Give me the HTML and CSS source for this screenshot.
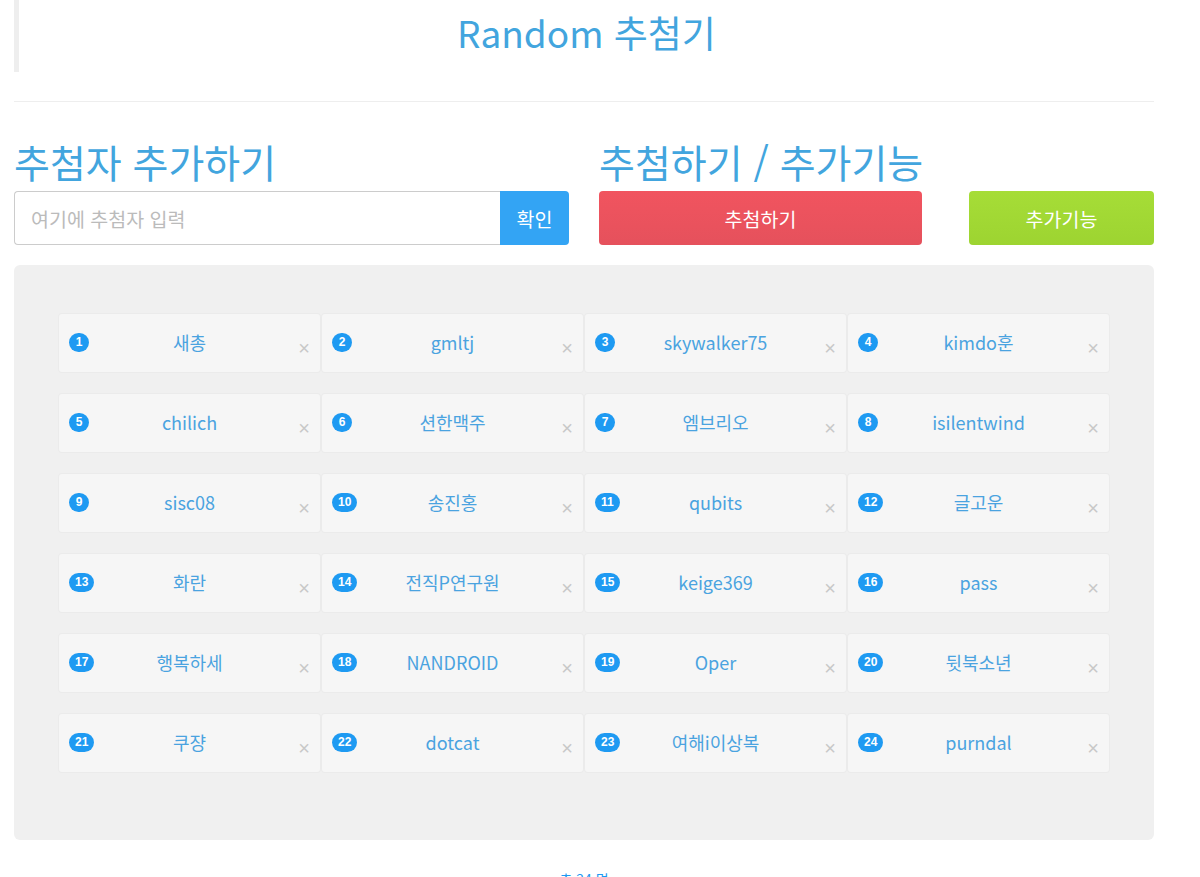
FILE: index.html
```html
<!DOCTYPE html>
<html lang="ko">
<head>
<meta charset="utf-8">
<title>Random 추첨기</title>
<link rel="stylesheet" href="styles.css">
</head>
<body>
<div class="container">
  <header class="header">
    <h1 class="title">Random 추첨기</h1>
  </header>
  <hr class="divider">
  <div class="controls">
    <section class="col">
      <h2 class="section-title">추첨자 추가하기</h2>
      <div class="input-group">
        <input class="name-input" type="text" placeholder="여기에 추첨자 입력">
        <button class="btn btn-confirm">확인</button>
      </div>
    </section>
    <section class="col">
      <h2 class="section-title">추첨하기 / 추가기능</h2>
      <div class="actions">
        <button class="btn btn-draw">추첨하기</button>
        <button class="btn btn-extra">추가기능</button>
      </div>
    </section>
  </div>
  <div class="panel">
    <div class="grid">
      <div class="card"><span class="badge">1</span><span class="name">새총</span><span class="close">×</span></div>
      <div class="card"><span class="badge">2</span><span class="name">gmltj</span><span class="close">×</span></div>
      <div class="card"><span class="badge">3</span><span class="name">skywalker75</span><span class="close">×</span></div>
      <div class="card"><span class="badge">4</span><span class="name">kimdo훈</span><span class="close">×</span></div>
      <div class="card"><span class="badge">5</span><span class="name">chilich</span><span class="close">×</span></div>
      <div class="card"><span class="badge">6</span><span class="name">션한맥주</span><span class="close">×</span></div>
      <div class="card"><span class="badge">7</span><span class="name">엠브리오</span><span class="close">×</span></div>
      <div class="card"><span class="badge">8</span><span class="name">isilentwind</span><span class="close">×</span></div>
      <div class="card"><span class="badge">9</span><span class="name">sisc08</span><span class="close">×</span></div>
      <div class="card"><span class="badge">10</span><span class="name">송진홍</span><span class="close">×</span></div>
      <div class="card"><span class="badge">11</span><span class="name">qubits</span><span class="close">×</span></div>
      <div class="card"><span class="badge">12</span><span class="name">글고운</span><span class="close">×</span></div>
      <div class="card"><span class="badge">13</span><span class="name">화란</span><span class="close">×</span></div>
      <div class="card"><span class="badge">14</span><span class="name">전직P연구원</span><span class="close">×</span></div>
      <div class="card"><span class="badge">15</span><span class="name">keige369</span><span class="close">×</span></div>
      <div class="card"><span class="badge">16</span><span class="name">pass</span><span class="close">×</span></div>
      <div class="card"><span class="badge">17</span><span class="name">행복하세</span><span class="close">×</span></div>
      <div class="card"><span class="badge">18</span><span class="name">NANDROID</span><span class="close">×</span></div>
      <div class="card"><span class="badge">19</span><span class="name">Oper</span><span class="close">×</span></div>
      <div class="card"><span class="badge">20</span><span class="name">뒷북소년</span><span class="close">×</span></div>
      <div class="card"><span class="badge">21</span><span class="name">쿠쟝</span><span class="close">×</span></div>
      <div class="card"><span class="badge">22</span><span class="name">dotcat</span><span class="close">×</span></div>
      <div class="card"><span class="badge">23</span><span class="name">여해i이상복</span><span class="close">×</span></div>
      <div class="card"><span class="badge">24</span><span class="name">purndal</span><span class="close">×</span></div>
    </div>
  </div>
  <footer class="footer">총 24 명</footer>
</div>
</body>
</html>
```
FILE: styles.css
```css
* { box-sizing: border-box; }
html, body { margin: 0; padding: 0; background: #fff; }
body {
  font-family: "Noto Sans CJK KR", "Noto Sans", sans-serif;
  color: #42a5de;
}
.container {
  width: 1140px;
  margin-left: 14px;
}
.header {
  height: 72px;
  border-left: 5px solid #eee;
  padding-bottom: 8px;
}
.title {
  margin: 0;
  font-size: 37px;
  font-weight: 400;
  line-height: 64px;
  text-align: center;
  color: #42a5de;
}
.divider {
  margin: 29px 0 0;
  border: 0;
  border-top: 1px solid #eee;
  height: 0;
}
.controls {
  display: flex;
  gap: 30px;
}
.col { flex: 1; }
.section-title {
  margin: 39px 0 10px;
  font-size: 39px;
  line-height: 40px;
  font-weight: 400;
  color: #42a5de;
}
.input-group {
  display: flex;
  height: 54px;
}
.name-input {
  flex: 1;
  border: 1px solid #ccc;
  border-right: 0;
  border-radius: 4px 0 0 4px;
  padding: 0 16px;
  font-family: inherit;
  font-size: 19.5px;
  color: #555;
  outline: none;
}
.name-input::placeholder { color: #bbb; }
.btn {
  border: 0;
  font-family: inherit;
  font-size: 19.5px;
  color: #fff;
  cursor: pointer;
}
.btn-confirm {
  width: 69px;
  background: #33a4f4;
  border-radius: 0 4px 4px 0;
}
.actions {
  display: flex;
  justify-content: space-between;
  height: 54px;
}
.btn-draw {
  width: 323px;
  border-radius: 4px;
  background: linear-gradient(#f1545f, #e5515c);
}
.btn-extra {
  width: 185px;
  border-radius: 4px;
  background: linear-gradient(#a6dd37, #9dd431);
}
.panel {
  margin-top: 20px;
  background: #f0f0f0;
  border-radius: 6px;
  padding: 49px 45px 68px;
}
.grid {
  display: grid;
  grid-template-columns: repeat(4, 1fr);
  column-gap: 2px;
  row-gap: 22px;
}
.card {
  position: relative;
  height: 58px;
  background: #f6f6f6;
  border-radius: 3px;
  box-shadow: 0 0 0 1px #ebebeb;
  display: flex;
  align-items: center;
  justify-content: center;
}
.badge {
  position: absolute;
  left: 10px;
  top: 19px;
  min-width: 20px;
  height: 19px;
  padding: 0 6px;
  border-radius: 10px;
  background: #1e9af2;
  color: #fff;
  font-family: "Liberation Sans", sans-serif;
  font-size: 12px;
  font-weight: 700;
  line-height: 19px;
  text-align: center;
}
.name {
  font-size: 18px;
  line-height: 24px;
  margin-top: -2px;
  color: #4aa3e0;
}
.close {
  position: absolute;
  right: 10px;
  top: 26px;
  font-family: "Liberation Sans", sans-serif;
  font-size: 20px;
  line-height: 16px;
  color: #c8c8c8;
}
.footer {
  margin-top: 29px;
  text-align: center;
  font-size: 14px;
  color: #1e9af2;
}
```
